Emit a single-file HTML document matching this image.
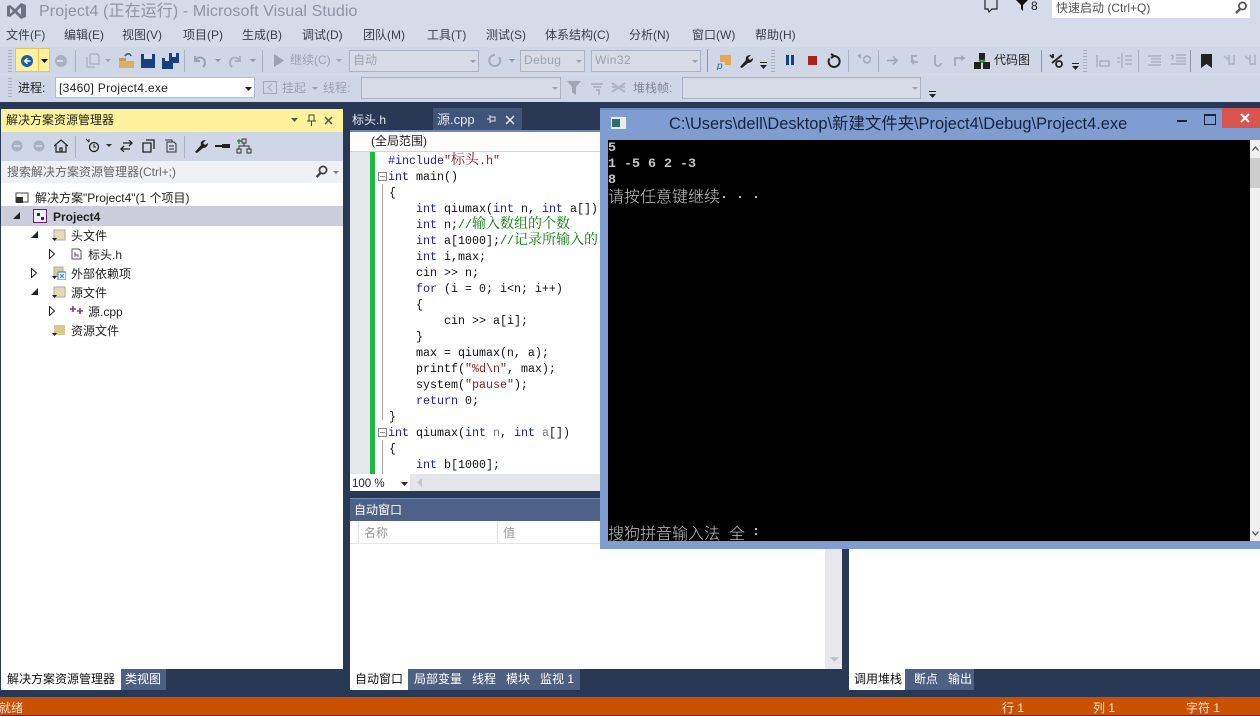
<!DOCTYPE html>
<html lang="zh"><head><meta charset="utf-8"><title>Project4 - Microsoft Visual Studio</title>
<style>
html,body{margin:0;padding:0}
body{width:1260px;height:715px;overflow:hidden;position:relative;background:#293955;font:12px/16px "Liberation Sans","Noto Sans CJK SC",sans-serif;color:#1e1e1e}
div,span,svg{position:absolute}
.t{white-space:nowrap;height:16px}
.g{color:#9aa2b2}
.w{color:#fff}
.m{color:#3a3f4a}
.combo{background:#d6dbe6;border:1px solid #aab2c4;box-sizing:border-box}
.sep{width:1px;background:#a8b0c2}
.code{left:388px;margin-top:1px;font:11.67px/16px "Liberation Mono","Noto Serif CJK SC",monospace;white-space:pre;color:#111;height:16px}
.code i{font:normal 14px/0 "Noto Serif CJK SC",serif;letter-spacing:0}
.code b{font-weight:normal;color:#1a1ab0}
.code u{text-decoration:none;color:#0a7d0a}
.code s{text-decoration:none;color:#8a2020}
.con{left:608px;margin-top:1px;font:bold 13.33px/16px "Liberation Mono",monospace;color:#c4c4c4;white-space:pre;height:16px}
.cj{font:16px/16px "Noto Sans CJK SC",sans-serif;color:#c4c4c4;white-space:nowrap;font-weight:300;height:16px}
.tree{font-size:12px}
</style></head><body>

<!-- chrome -->
<div style="left:0;top:0;width:1260px;height:102px;background:#d6dbe9"></div>
<div style="left:0;top:47px;width:1260px;height:27px;background:#cfd6e5"></div>
<div style="left:0;top:75px;width:1260px;height:27px;background:#cfd6e5"></div>

<!-- VS logo -->
<svg style="left:6px;top:1px" width="22" height="20" viewBox="0 0 22 20"><path d="M1 5l3-1 5 4 6-6 5 2v12l-5 2-6-6-5 4-3-1zM4 7v6l3-3zM15 6l-4 4 4 4z" fill="#6b7385" fill-rule="evenodd"/></svg>
<span class="t" style="left:39px;top:3px;font-size:16px;line-height:18px;color:#8c94a6;height:18px;letter-spacing:.1px">Project4 (正在运行) - Microsoft Visual Studio</span>

<!-- top right -->
<svg style="left:983px;top:0" width="18" height="14" viewBox="0 0 18 14"><path d="M2 0v9h3l1 3 3-3h5V0" fill="none" stroke="#222" stroke-width="1.2"/></svg>
<svg style="left:1016px;top:0" width="14" height="12" viewBox="0 0 14 12"><path d="M0 0h12L7 5v6L5 9V5z" fill="#111"/></svg>
<span class="t" style="left:1031px;top:-2px;color:#222">8</span>
<div style="left:1052px;top:0;width:198px;height:18px;background:#fff"></div>
<span class="t" style="left:1056px;top:0;color:#555">快速启动 (Ctrl+Q)</span>
<svg style="left:1234px;top:1px" width="14" height="14" viewBox="0 0 14 14"><circle cx="8.5" cy="5" r="3.6" fill="none" stroke="#555" stroke-width="1.8"/><path d="M6 8l-4 4" stroke="#555" stroke-width="2.4"/></svg>

<!-- menu -->
<span class="t m" style="left:6px;top:27px">文件(F)</span>
<span class="t m" style="left:64px;top:27px">编辑(E)</span>
<span class="t m" style="left:122px;top:27px">视图(V)</span>
<span class="t m" style="left:183px;top:27px">项目(P)</span>
<span class="t m" style="left:242px;top:27px">生成(B)</span>
<span class="t m" style="left:302px;top:27px">调试(D)</span>
<span class="t m" style="left:363px;top:27px">团队(M)</span>
<span class="t m" style="left:427px;top:27px">工具(T)</span>
<span class="t m" style="left:486px;top:27px">测试(S)</span>
<span class="t m" style="left:545px;top:27px">体系结构(C)</span>
<span class="t m" style="left:629px;top:27px">分析(N)</span>
<span class="t m" style="left:692px;top:27px">窗口(W)</span>
<span class="t m" style="left:755px;top:27px">帮助(H)</span>

<!-- toolbar 1 -->
<div style="left:8px;top:50px;width:4px;height:22px;background:repeating-linear-gradient(#a9b0bf 0 1px,#cfd6e5 1px 3px)"></div>
<div style="left:15px;top:48px;width:35px;height:24px;background:#fff29d;box-sizing:border-box;border:1px solid #e5c365"></div>
<div style="left:38px;top:48px;width:1px;height:24px;background:#e5c365"></div>
<svg style="left:20px;top:54px" width="14" height="14" viewBox="0 0 14 14"><circle cx="7" cy="7" r="6" fill="#1b5fa8"/><path d="M10.500 7H5M7.500 4.300L4.600 7l2.900 2.700" stroke="#fff" stroke-width="1.500" fill="none"/></svg>
<svg style="left:41px;top:59px" width="7" height="4"><path d="M0 0h7L3.500 4z" fill="#111"/></svg>
<svg style="left:54px;top:54px" width="14" height="14"><circle cx="7" cy="7" r="6" fill="#aab1c1"/><path d="M3 7h6" stroke="#d8dde8" stroke-width="2"/></svg>
<div class="sep" style="left:75px;top:50px;height:22px"></div>
<svg style="left:86px;top:53px" width="14" height="15"><path d="M4 1h7l2 2v8h-9zM1 4v10h8" fill="none" stroke="#a9b0bf" stroke-width="1.300"/></svg>
<svg style="left:105px;top:59px" width="6" height="3"><path d="M0 0h6L3 3z" fill="#9aa2b2"/></svg>
<svg style="left:118px;top:52px" width="17" height="17"><path d="M1 9h15v7H1z" fill="#dfae60"/><path d="M1 6h7v3H1z" fill="#c99b52"/><path d="M7 4c2-3 5-3 6 0" stroke="#1b5fa8" stroke-width="1.600" fill="none"/></svg>
<svg style="left:141px;top:54px" width="14" height="14"><path d="M0 0h14v14H0z" fill="#14427f"/><path d="M3 0h8v5H3z" fill="#d6dbe9"/><path d="M3 9h8v5H3z" fill="#14427f"/></svg>
<svg style="left:162px;top:53px" width="17" height="16"><path d="M0 5h11v11H0z" fill="#14427f"/><path d="M7 0h10v10H7z" fill="#14427f"/><path d="M10 0h4v4h-4zM3 5h4v3H3z" fill="#d6dbe9"/></svg>
<div class="sep" style="left:184px;top:50px;height:22px"></div>
<svg style="left:192px;top:53px" width="15" height="15"><path d="M3 3v5h5M3 8c2-5 10-5 10 2 0 2-1 3-2 4" fill="none" stroke="#98a0b2" stroke-width="2"/></svg>
<svg style="left:215px;top:59px" width="6" height="3"><path d="M0 0h6L3 3z" fill="#8b93a5"/></svg>
<svg style="left:228px;top:53px" width="15" height="15"><path d="M12 3v5H7M12 8C10 3 2 3 2 10c0 2 1 3 2 4" fill="none" stroke="#a9b0bf" stroke-width="2"/></svg>
<svg style="left:250px;top:59px" width="6" height="3"><path d="M0 0h6L3 3z" fill="#8b93a5"/></svg>
<div class="sep" style="left:262px;top:50px;height:22px"></div>
<svg style="left:274px;top:54px" width="10" height="13"><path d="M0 0l10 6.500L0 13z" fill="#9aa2b2"/></svg>
<span class="t g" style="left:290px;top:52px">继续(C)</span>
<svg style="left:336px;top:59px" width="6" height="3"><path d="M0 0h6L3 3z" fill="#9aa2b2"/></svg>
<div class="combo" style="left:349px;top:50px;width:130px;height:22px"></div>
<span class="t g" style="left:353px;top:52px">自动</span>
<svg style="left:470px;top:60px" width="6" height="3"><path d="M0 0h6L3 3z" fill="#9aa2b2"/></svg>
<svg style="left:487px;top:53px" width="15" height="15"><path d="M8 2a5.500 5.500 0 1 0 4 2" fill="none" stroke="#a2a9ba" stroke-width="2"/></svg>
<svg style="left:509px;top:59px" width="6" height="3"><path d="M0 0h6L3 3z" fill="#8b93a5"/></svg>
<div class="combo" style="left:520px;top:50px;width:65px;height:22px"></div>
<span class="t g" style="left:524px;top:52px;letter-spacing:.4px">Debug</span>
<svg style="left:576px;top:60px" width="6" height="3"><path d="M0 0h6L3 3z" fill="#9aa2b2"/></svg>
<div class="combo" style="left:591px;top:50px;width:110px;height:22px"></div>
<span class="t g" style="left:595px;top:52px;letter-spacing:.4px">Win32</span>
<svg style="left:692px;top:60px" width="6" height="3"><path d="M0 0h6L3 3z" fill="#9aa2b2"/></svg>
<div class="sep" style="left:707px;top:49px;height:23px;background:#8f97aa"></div>
<svg style="left:714px;top:54px" width="18" height="16"><path d="M6 1h11v10H6z" fill="#e8a74e"/><path d="M1 8h10v7H1z" fill="#cfd6e5"/><text x="3" y="15" font-size="10" font-family="Liberation Sans" fill="#1b5fa8" font-style="italic">p</text></svg>
<svg style="left:739px;top:54px" width="14" height="14"><path d="M1 13l6-7c-1-3 1-5 5-5L9 4l2 2 3-2c0 4-3 5-5 5l-6 5z" fill="#222"/></svg>
<svg style="left:760px;top:62px" width="7" height="7"><path d="M0 0h7v1H0zM0 3h7L3.500 7z" fill="#222"/></svg>
<div style="left:771px;top:50px;width:4px;height:22px;background:repeating-linear-gradient(#a9b0bf 0 1px,#cfd6e5 1px 3px)"></div>
<div style="left:786px;top:55px;width:3px;height:10px;background:#14427f"></div>
<div style="left:791px;top:55px;width:3px;height:10px;background:#14427f"></div>
<div style="left:808px;top:56px;width:9px;height:9px;background:#a5241c"></div>
<svg style="left:826px;top:52px" width="16" height="17"><path d="M5 2l3 2-3 2M8 4a5.500 5.500 0 1 1-4.500 2.500" fill="none" stroke="#222" stroke-width="2"/></svg>
<div class="sep" style="left:848px;top:50px;height:22px"></div>
<svg style="left:857px;top:53px" width="15" height="15"><path d="M1 2l3 3M3 1v4M7 5a3 3 0 1 0 6 3 3 3 0 0 0-6-3" fill="none" stroke="#a2a9ba" stroke-width="1.600"/></svg>
<div class="sep" style="left:878px;top:50px;height:22px"></div>
<svg style="left:887px;top:55px" width="12" height="11"><path d="M0 5.500h10M6 1.500l4 4-4 4" fill="none" stroke="#a2a9ba" stroke-width="1.800"/></svg>
<svg style="left:908px;top:54px" width="14" height="14"><path d="M9 2H4v6h6M6 6L4 8l2 2" fill="none" stroke="#a2a9ba" stroke-width="1.800"/></svg>
<svg style="left:932px;top:54px" width="12" height="14"><path d="M3 1v8a3 3 0 0 0 6 0" fill="none" stroke="#a2a9ba" stroke-width="1.800"/></svg>
<svg style="left:953px;top:54px" width="14" height="14"><path d="M2 12V4h8M8 2l3 2-3 2" fill="none" stroke="#a2a9ba" stroke-width="1.800"/></svg>
<svg style="left:974px;top:53px" width="16" height="16"><path d="M5 0h6v7H5zM0 9h7v7H0zM9 9h7v7H9z" fill="#222"/><path d="M5 7l3 2 3-2" stroke="#2d8a3a" stroke-width="2" fill="none"/></svg>
<span class="t" style="left:994px;top:52px;color:#222">代码图</span>
<div class="sep" style="left:1041px;top:50px;height:22px;background:#8f97aa"></div>
<svg style="left:1049px;top:53px" width="16" height="16"><path d="M1 2l3 3M4 1v4M13 2L3 10" fill="none" stroke="#222" stroke-width="1.800"/><circle cx="10" cy="11" r="3" fill="none" stroke="#222" stroke-width="1.800"/></svg>
<svg style="left:1072px;top:63px" width="7" height="7"><path d="M0 0h7v1H0zM0 3h7L3.500 7z" fill="#222"/></svg>
<div style="left:1083px;top:50px;width:4px;height:22px;background:repeating-linear-gradient(#a9b0bf 0 1px,#cfd6e5 1px 3px)"></div>
<svg style="left:1096px;top:55px" width="14" height="12"><path d="M1 0v12M4 6h9v5H4z" fill="none" stroke="#a2a9ba" stroke-width="1.300"/></svg>
<svg style="left:1117px;top:53px" width="15" height="15"><path d="M5 0v15M8 3h7M8 7h7M8 11h7M0 5h3M0 9h3" stroke="#a2a9ba" stroke-width="1.200"/></svg>
<div class="sep" style="left:1138px;top:50px;height:22px"></div>
<svg style="left:1148px;top:55px" width="13" height="11"><path d="M0 1h13M3 4h10M3 7h10M0 10h13" stroke="#a2a9ba" stroke-width="1.200"/></svg>
<svg style="left:1170px;top:54px" width="16" height="13"><path d="M6 1h10M6 4h10M6 7h10M1 10h15M1 2c2-2 3 1 1 3v1" fill="none" stroke="#a2a9ba" stroke-width="1.200"/></svg>
<div class="sep" style="left:1190px;top:50px;height:22px;background:#8f97aa"></div>
<svg style="left:1201px;top:54px" width="11" height="14"><path d="M0 0h11v14l-5.500-4L0 14z" fill="#222"/></svg>
<svg style="left:1223px;top:54px" width="13" height="13"><path d="M1 2l5 4M6 1v9h5V1" fill="none" stroke="#b0b7c6" stroke-width="1.800"/></svg>
<svg style="left:1244px;top:54px" width="13" height="13"><path d="M1 2l5 4M6 1v9h5V1" fill="none" stroke="#b0b7c6" stroke-width="1.800"/></svg>

<!-- toolbar 2 -->
<div style="left:8px;top:78px;width:4px;height:20px;background:repeating-linear-gradient(#a9b0bf 0 1px,#cfd6e5 1px 3px)"></div>
<span class="t" style="left:18px;top:80px;color:#222">进程:</span>
<div style="left:55px;top:77px;width:200px;height:21px;background:#fff;border:1px solid #b4bbcb;box-sizing:border-box"></div>
<span class="t" style="left:59px;top:80px;color:#222;letter-spacing:.3px">[3460] Project4.exe</span>
<svg style="left:245px;top:87px" width="7" height="4"><path d="M0 0h7L3.500 4z" fill="#222"/></svg>
<svg style="left:263px;top:81px" width="14" height="13"><path d="M.500.500h13v12H.500z" fill="none" stroke="#a2a9ba"/><path d="M9 3L5 6.500 9 10" fill="none" stroke="#a2a9ba"/></svg>
<span class="t g" style="left:282px;top:80px">挂起</span>
<svg style="left:312px;top:87px" width="6" height="3"><path d="M0 0h6L3 3z" fill="#9aa2b2"/></svg>
<span class="t g" style="left:323px;top:80px">线程:</span>
<div class="combo" style="left:361px;top:77px;width:200px;height:22px"></div>
<svg style="left:552px;top:87px" width="6" height="3"><path d="M0 0h6L3 3z" fill="#9aa2b2"/></svg>
<svg style="left:567px;top:81px" width="14" height="14"><path d="M0 0h14L9 6v8L5 11V6z" fill="#9ea6b6"/></svg>
<svg style="left:590px;top:81px" width="14" height="14"><path d="M1 3h12M3 6h8M6 9h3v5" stroke="#aeb5c4" stroke-width="2" fill="none"/></svg>
<svg style="left:611px;top:82px" width="15" height="11"><path d="M1 1l13 9M14 1L1 10M1 5h13" stroke="#aeb5c4" stroke-width="2"/></svg>
<span class="t g" style="left:633px;top:80px;color:#7e8799">堆栈帧:</span>
<div class="combo" style="left:682px;top:77px;width:239px;height:22px"></div>
<svg style="left:912px;top:87px" width="6" height="3"><path d="M0 0h6L3 3z" fill="#9aa2b2"/></svg>
<svg style="left:929px;top:91px" width="7" height="7"><path d="M0 0h7v1H0zM0 3h7L3.500 7z" fill="#222"/></svg>

<!-- solution explorer -->
<div style="left:1px;top:109px;width:342px;height:23px;background:#fff29d"></div>
<span class="t" style="left:6px;top:112px;color:#222">解决方案资源管理器</span>
<svg style="left:291px;top:118px" width="7" height="4"><path d="M0 0h7L3.500 4z" fill="#555"/></svg>
<svg style="left:307px;top:114px" width="9" height="12"><path d="M2 1h5v6H2zM0 7h9M4.500 7v5" stroke="#444" fill="none"/></svg>
<svg style="left:324px;top:116px" width="9" height="9"><path d="M1 1l7 7M8 1L1 8" stroke="#555" stroke-width="1.500"/></svg>
<div style="left:1px;top:132px;width:342px;height:29px;background:#cfd6e5"></div>
<svg style="left:11px;top:140px" width="12" height="12"><circle cx="6" cy="6" r="5.500" fill="#a9b0bf"/><path d="M3 6h6" stroke="#dde" stroke-width="1.500"/></svg>
<svg style="left:33px;top:140px" width="12" height="12"><circle cx="6" cy="6" r="5.500" fill="#a9b0bf"/><path d="M3 6h6" stroke="#dde" stroke-width="1.500"/></svg>
<svg style="left:54px;top:139px" width="14" height="14"><path d="M0 7l7-6 7 6M2 6v7h10V6M6 13V9h2v4" fill="none" stroke="#222" stroke-width="1.200"/></svg>
<div class="sep" style="left:75px;top:136px;height:22px"></div>
<svg style="left:85px;top:138px" width="15" height="15"><circle cx="9" cy="9" r="4.500" fill="none" stroke="#222" stroke-width="1.300"/><path d="M9 6v3h2M1 1l3 3M4 1v3" stroke="#222" fill="none"/></svg>
<svg style="left:106px;top:144px" width="6" height="3"><path d="M0 0h6L3 3z" fill="#333"/></svg>
<svg style="left:120px;top:140px" width="13" height="12"><path d="M3 3h9M9 0l3 3-3 3M10 9H1M4 6L1 9l3 3" fill="none" stroke="#222" stroke-width="1.300"/></svg>
<svg style="left:142px;top:139px" width="13" height="14"><path d="M1 4h8v9H1zM4 1h8v9" fill="none" stroke="#222" stroke-width="1.300"/></svg>
<svg style="left:164px;top:139px" width="13" height="14"><path d="M1 1h7v2M3 3h7l2 2v8H3zM5 7h5M5 10h5" fill="none" stroke="#333"/></svg>
<div class="sep" style="left:184px;top:136px;height:22px"></div>
<svg style="left:194px;top:139px" width="14" height="14"><path d="M1 13l6-7c-1-3 1-5 5-5L9 4l2 2 3-2c0 4-3 5-5 5l-6 5z" fill="#222"/></svg>
<div style="left:215px;top:145px;width:15px;height:2px;background:#222"></div>
<div style="left:222px;top:144px;width:8px;height:4px;background:#222"></div>
<svg style="left:236px;top:138px" width="16" height="16"><path d="M6 1h4v4H6zM1 11h4v4H1zM11 11h4v4h-4zM8 5v3H3v3M8 8h5v3" fill="none" stroke="#333"/><path d="M3 1v5M1 3h5" stroke="#2d8a3a" stroke-width="1.400"/></svg>
<div style="left:1px;top:161px;width:342px;height:22px;background:#f0f1f5"></div>
<span class="t" style="left:7px;top:164px;color:#666">搜索解决方案资源管理器(Ctrl+;)</span>
<svg style="left:315px;top:165px" width="13" height="13"><circle cx="8" cy="5" r="3.600" fill="none" stroke="#444" stroke-width="1.800"/><path d="M5.500 8l-4 4" stroke="#444" stroke-width="2.400"/></svg>
<svg style="left:333px;top:171px" width="6" height="3"><path d="M0 0h6L3 3z" fill="#777"/></svg>

<div style="left:1px;top:183px;width:342px;height:486px;background:#fff"></div>
<div style="left:1px;top:206px;width:342px;height:20px;background:#cccedb"></div>

<svg style="left:15px;top:190px" width="15" height="14"><path d="M1 3h12v9H1z" fill="none" stroke="#444"/><rect x="1" y="7" width="7" height="6" fill="#333"/></svg>
<span class="t" style="left:35px;top:190px;color:#222">解决方案"Project4"(1 个项目)</span>
<svg style="left:13px;top:212px" width="7" height="7"><path d="M7 0v7H0z" fill="#222"/></svg>
<svg style="left:33px;top:209px" width="14" height="14"><path d="M.500.500h13v13H.500z" fill="#f3eefa" stroke="#68217a"/><path d="M4 4h3v3H4zM8 8h3v3H8z" fill="#333"/></svg>
<span class="t" style="left:53px;top:209px;font-weight:bold;color:#222">Project4</span>

<svg style="left:31px;top:231px" width="7" height="7"><path d="M7 0v7H0z" fill="#222"/></svg>
<svg style="left:51px;top:228px" width="15" height="14"><path d="M3 2h11v10H3z" fill="#e8d9b5" stroke="#aaa"/><path d="M1 10h5L3.500 13z" fill="#222"/></svg>
<span class="t" style="left:71px;top:228px;color:#222">头文件</span>
<svg style="left:49px;top:249px" width="6" height="10"><path d="M.500.500l5 4.500-5 4.500z" fill="#fff" stroke="#222"/></svg>
<svg style="left:71px;top:248px" width="11" height="12"><path d="M1 1h7l2 2v8H1z" fill="none" stroke="#555"/><path d="M4 4v5M4 7h3v2" stroke="#7a3a90" fill="none"/></svg>
<span class="t" style="left:88px;top:247px;color:#222">标头.h</span>

<svg style="left:31px;top:268px" width="6" height="10"><path d="M.500.500l5 4.500-5 4.500z" fill="#fff" stroke="#222"/></svg>
<svg style="left:51px;top:266px" width="15" height="14"><path d="M3 1h9v9H3z" fill="#dcc9a0" stroke="#aaa"/><path d="M7 6h8v8H7z" fill="#fff" stroke="#2a7ab5"/><path d="M9 8l4 4M13 8l-4 4" stroke="#2a7ab5"/><path d="M1 10h5L3.500 13z" fill="#222"/></svg>
<span class="t" style="left:71px;top:266px;color:#222">外部依赖项</span>

<svg style="left:31px;top:288px" width="7" height="7"><path d="M7 0v7H0z" fill="#222"/></svg>
<svg style="left:51px;top:285px" width="15" height="14"><path d="M3 2h11v10H3z" fill="#e8d9b5" stroke="#aaa"/><path d="M1 10h5L3.500 13z" fill="#222"/></svg>
<span class="t" style="left:71px;top:285px;color:#222">源文件</span>
<svg style="left:49px;top:306px" width="6" height="10"><path d="M.500.500l5 4.500-5 4.500z" fill="#fff" stroke="#222"/></svg>
<svg style="left:70px;top:306px" width="13" height="9"><path d="M0 3h6M3 0v6M7 5h6M10 2v6" stroke="#7a3a90" stroke-width="1.600"/></svg>
<span class="t" style="left:88px;top:304px;color:#222">源.cpp</span>
<svg style="left:51px;top:323px" width="15" height="14"><path d="M3 2h11v10H3z" fill="#dfc68f"/><path d="M1 10h5L3.500 13z" fill="#222"/></svg>
<span class="t" style="left:71px;top:323px;color:#222">资源文件</span>

<!-- left tabs -->
<div style="left:1px;top:669px;width:120px;height:21px;background:#fff"></div>
<span class="t" style="left:7px;top:671px;color:#111">解决方案资源管理器</span>
<div style="left:121px;top:669px;width:45px;height:21px;background:#4d6082"></div>
<span class="t w" style="left:125px;top:671px">类视图</span>

<!-- editor -->
<span class="t" style="left:352px;top:112px;color:#e4e8f0">标头.h</span>
<div style="left:433px;top:108px;width:89px;height:22px;background:#3f5478"></div>
<span class="t" style="left:437px;top:112px;color:#e4e8f0;font-size:13px">源.cpp</span>
<svg style="left:487px;top:114px" width="10" height="10"><path d="M3 1v8M3 3h5v4H3M0 5h3" fill="none" stroke="#dfe4ee"/></svg>
<svg style="left:505px;top:115px" width="10" height="10"><path d="M1 1l8 8M9 1L1 9" stroke="#e6eaf2" stroke-width="1.500"/></svg>
<div style="left:350px;top:130px;width:250px;height:2px;background:#6f8ab8"></div>
<div style="left:350px;top:132px;width:250px;height:19px;background:#fdfdfd"></div>
<span class="t" style="left:371px;top:133px;color:#222">(全局范围)</span>
<div style="left:350px;top:151px;width:250px;height:323px;background:#fff;border-top:1px solid #cfd3dc;box-sizing:border-box"></div>
<div style="left:350px;top:152px;width:20px;height:322px;background:#e6e7e8"></div>
<div style="left:370px;top:152px;width:5px;height:322px;background:#1fb83f"></div>
<div style="left:382px;top:184px;width:1px;height:236px;background:#a5a5a5"></div>
<div style="left:382px;top:440px;width:1px;height:34px;background:#a5a5a5"></div>
<svg style="left:378px;top:172px" width="9" height="9"><path d="M.500.500h8v8h-8zM2 4.500h5" fill="#fff" stroke="#888"/></svg>
<svg style="left:378px;top:428px" width="9" height="9"><path d="M.500.500h8v8h-8zM2 4.500h5" fill="#fff" stroke="#888"/></svg>

<span class="code" style="top:152px"><b>#include</b><s>"<i>标头</i>.h"</s></span>
<span class="code" style="top:168px"><b>int</b> main()</span>
<span class="code" style="top:184px;left:389px">{</span>
<span class="code" style="top:200px;left:416px"><b>int</b> qiumax(<b>int</b> n, <b>int</b> a[])</span>
<span class="code" style="top:216px;left:416px"><b>int</b> n;<u>//<i>输入数组的个数</i></u></span>
<span class="code" style="top:232px;left:416px"><b>int</b> a[1000];<u>//<i>记录所输入的</i></u></span>
<span class="code" style="top:248px;left:416px"><b>int</b> i,max;</span>
<span class="code" style="top:264px;left:416px">cin &gt;&gt; n;</span>
<span class="code" style="top:280px;left:416px"><b>for</b> (i = 0; i&lt;n; i++)</span>
<span class="code" style="top:296px;left:416px">{</span>
<span class="code" style="top:312px;left:444px">cin &gt;&gt; a[i];</span>
<span class="code" style="top:328px;left:416px">}</span>
<span class="code" style="top:344px;left:416px">max = qiumax(n, a);</span>
<span class="code" style="top:360px;left:416px">printf(<s>"%d\n"</s>, max);</span>
<span class="code" style="top:376px;left:416px">system(<s>"pause"</s>);</span>
<span class="code" style="top:392px;left:416px"><b>return</b> 0;</span>
<span class="code" style="top:408px;left:389px">}</span>
<span class="code" style="top:424px"><b>int</b> qiumax(<b>int</b> <span style="position:static;color:#777">n</span>, <b>int</b> <span style="position:static;color:#777">a</span>[])</span>
<span class="code" style="top:440px;left:389px">{</span>
<span class="code" style="top:456px;left:416px"><b>int</b> b[1000];</span>

<div style="left:350px;top:474px;width:250px;height:17px;background:#e5e6ea"></div>
<div style="left:350px;top:474px;width:60px;height:17px;background:#fff"></div>
<span class="t" style="left:352px;top:476px;color:#222;font-size:11.500px">100 %</span>
<svg style="left:401px;top:482px" width="7" height="4"><path d="M0 0h7L3.500 4z" fill="#222"/></svg>
<svg style="left:417px;top:478px" width="5" height="9"><path d="M5 0v9L0 4.500z" fill="#c4c6cc"/></svg>

<!-- autos -->
<div style="left:350px;top:498px;width:250px;height:23px;background:#4d6286;border-top:1px solid #6f8ab8;box-sizing:border-box"></div>
<span class="t w" style="left:354px;top:502px">自动窗口</span>
<div style="left:350px;top:521px;width:492px;height:148px;background:#fff"></div>
<div style="left:358px;top:521px;width:1px;height:23px;background:#dcdde2"></div>
<div style="left:497px;top:521px;width:1px;height:23px;background:#dcdde2"></div>
<div style="left:350px;top:543px;width:250px;height:1px;background:#e4e5e9"></div>
<span class="t" style="left:364px;top:525px;color:#9a9a9a">名称</span>
<span class="t" style="left:503px;top:525px;color:#9a9a9a">值</span>
<div style="left:825px;top:549px;width:17px;height:120px;background:#e7e8ec"></div>
<svg style="left:830px;top:657px" width="9" height="5"><path d="M0 0h9L4.500 5z" fill="#c3c5cc"/></svg>

<div style="left:350px;top:669px;width:58px;height:21px;background:#fff"></div>
<span class="t" style="left:355px;top:671px;color:#111">自动窗口</span>
<div style="left:408px;top:669px;width:172px;height:21px;background:#4d6082"></div>
<span class="t w" style="left:414px;top:671px">局部变量</span>
<span class="t w" style="left:472px;top:671px">线程</span>
<span class="t w" style="left:506px;top:671px">模块</span>
<span class="t w" style="left:540px;top:671px">监视 1</span>

<!-- call stack panel -->
<div style="left:849px;top:549px;width:411px;height:120px;background:#fff"></div>
<div style="left:849px;top:669px;width:56px;height:21px;background:#fff"></div>
<span class="t" style="left:854px;top:671px;color:#111">调用堆栈</span>
<div style="left:905px;top:669px;width:69px;height:21px;background:#4d6082"></div>
<span class="t w" style="left:914px;top:671px">断点</span>
<span class="t w" style="left:948px;top:671px">输出</span>

<!-- console -->
<div style="left:600px;top:108px;width:660px;height:441px;background:#7f9dd0"></div>
<div style="left:600px;top:108px;width:660px;height:2px;background:#6d8cc4"></div>
<svg style="left:611px;top:117px" width="15" height="12"><path d="M0 0h15v12H0z" fill="#e8eef0"/><path d="M1 2h8v8H1z" fill="#2f6f68"/></svg>
<span class="t" style="left:669px;top:115px;font-size:16.400px;line-height:18px;height:18px;color:#16233f">C:\Users\dell\Desktop\新建文件夹\Project4\Debug\Project4.exe</span>
<div style="left:1177px;top:120px;width:10px;height:2px;background:#16233f"></div>
<div style="left:1204px;top:114px;width:10px;height:8px;border:1px solid #16233f;border-top-width:2px;box-sizing:content-box"></div>
<div style="left:1222px;top:108px;width:38px;height:20px;background:#d9534f"></div>
<svg style="left:1240px;top:113px" width="10" height="10"><path d="M1 1l8 8M9 1L1 9" stroke="#fff" stroke-width="2"/></svg>
<div style="left:608px;top:140px;width:642px;height:401px;background:#000"></div>
<div style="left:1250px;top:140px;width:10px;height:401px;background:#f0f0f0"></div>
<div style="left:1250px;top:158px;width:10px;height:30px;background:#cdcdcd"></div>
<svg style="left:1252px;top:146px" width="7" height="5"><path d="M.500 4.500L3.500 1l3 3.500" fill="none" stroke="#555" stroke-width="1.300"/></svg>
<svg style="left:1252px;top:531px" width="7" height="5"><path d="M.500.500L3.500 4l3-3.500" fill="none" stroke="#555" stroke-width="1.300"/></svg>

<span class="con" style="top:140px">5</span>
<span class="con" style="top:156px">1 -5 6 2 -3</span>
<span class="con" style="top:172px">8</span>
<span class="cj" style="left:608px;top:187px">请按任意键继续</span>
<span class="con" style="left:720px;top:187px">. . .</span>
<span class="cj" style="left:608px;top:524px">搜狗拼音输入法</span>
<span class="cj" style="left:729px;top:524px">全</span>
<span class="con" style="left:752px;top:524px">:</span>

<!-- status bar -->
<div style="left:0;top:697px;width:1260px;height:18px;background:#ca5100"></div>
<span class="t" style="left:-1px;top:700px;color:#f2e4d8">就绪</span>
<span class="t" style="left:1002px;top:700px;color:#f2e4d8">行 1</span>
<span class="t" style="left:1093px;top:700px;color:#f2e4d8">列 1</span>
<span class="t" style="left:1186px;top:700px;color:#f2e4d8">字符 1</span>

</body></html>
